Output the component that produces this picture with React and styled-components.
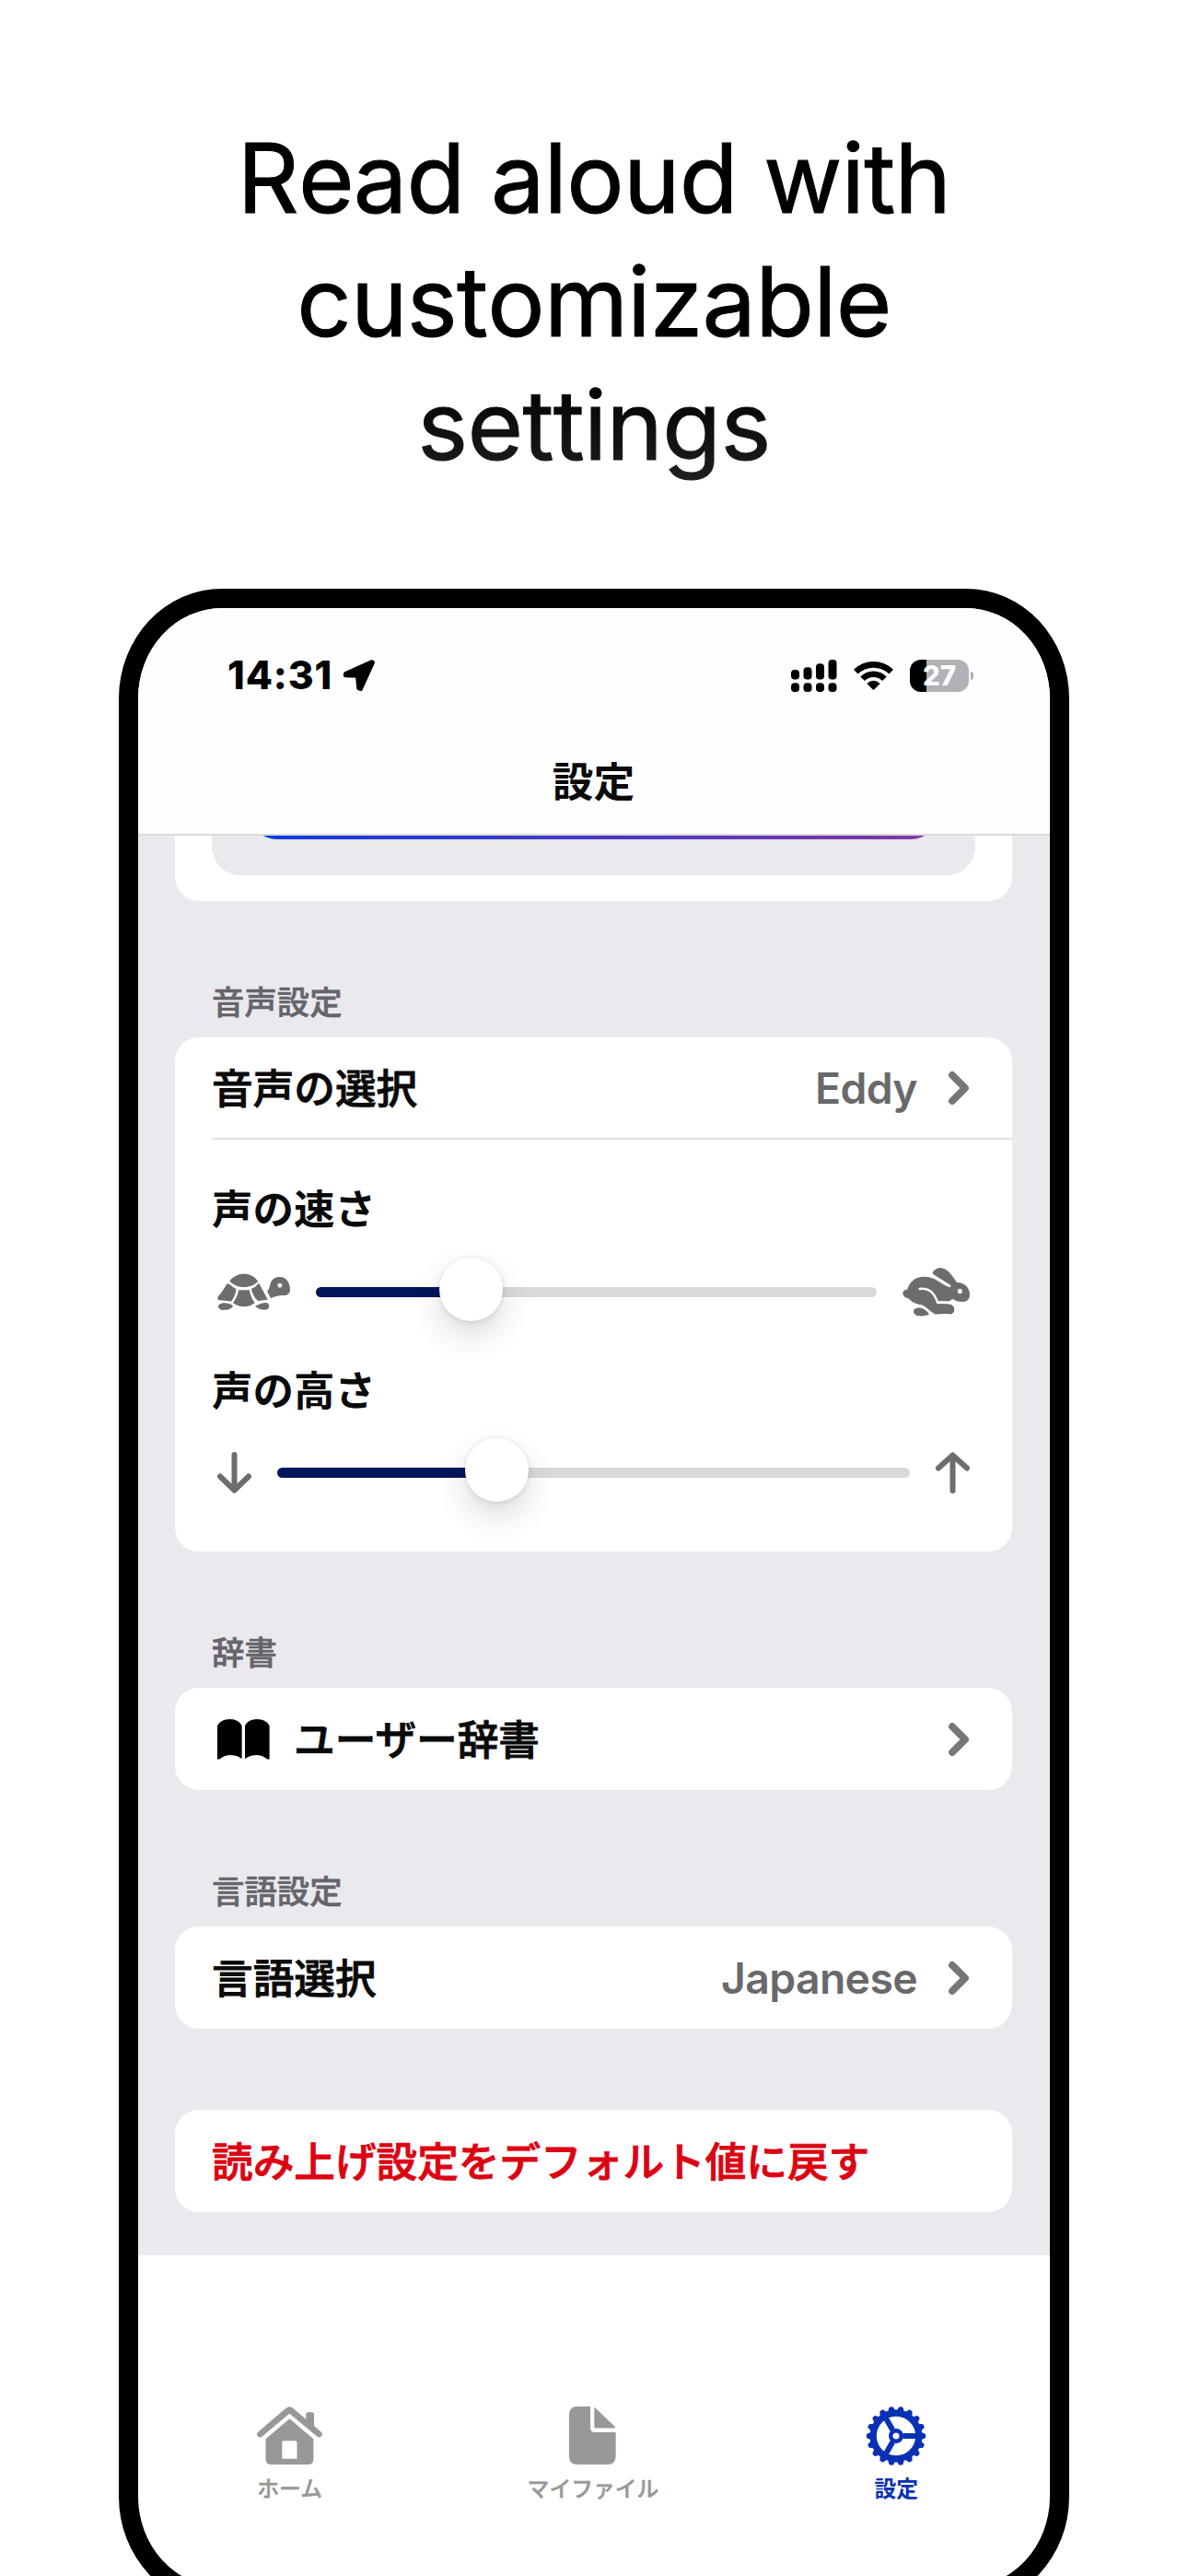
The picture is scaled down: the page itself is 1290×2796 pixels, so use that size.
import React from "react";
import styled, { createGlobalStyle } from "styled-components";

const latin = `Inter, "Noto Sans CJK JP", sans-serif`;
const japanese = `"Noto Sans CJK JP", Inter, sans-serif`;

const GlobalStyle = createGlobalStyle`
  * { box-sizing: border-box; }
  body { margin: 0; background: #fff; }
  svg { display: block; flex: none; overflow: visible; }
`;

const Page = styled.main`
  display: flex;
  flex-direction: column;
  align-items: center;
  width: 1290px;
  height: 2796px;
  overflow: hidden;
  background: #fff;
  font-family: ${latin};
  font-optical-sizing: none;
`;

const Headline = styled.h1`
  flex: none;
  width: 900px;
  height: 402px;
  margin: 126px 0 111px;
  font-size: 104px;
  font-weight: 400;
  font-kerning: none;
  line-height: 134px;
  letter-spacing: -0.7px;
  text-align: center;
  color: transparent;
  -webkit-text-stroke: 1px transparent;
  background: linear-gradient(#000 70%, #1e1e1e 98%);
  background-clip: text;
`;

const Phone = styled.section`
  flex: none;
  display: flex;
  flex-direction: column;
  width: 1032px;
  height: 2190px;
  border: 21px solid #000;
  border-radius: 112px / 119px;
  overflow: hidden;
  background: #fff;
`;

const Header = styled.header`
  flex: none;
  display: flex;
  flex-direction: column;
  height: 247px;
  background: #fefefe;
  border-bottom: 2px solid #dad9dc;
`;

const StatusBar = styled.div`
  display: flex;
  align-items: center;
  justify-content: space-between;
  height: 146px;
  padding: 0 83px 0 97px;
`;

const StatusGroup = styled.div`
  display: flex;
  align-items: center;
  gap: ${(p) => p.$gap}px;
`;

const Clock = styled.time`
  width: 112px;
  font-size: 42.5px;
  font-weight: 800;
  line-height: 50px;
  letter-spacing: 0.9px;
  white-space: nowrap;
`;

const BatteryShell = styled.div`
  display: flex;
  align-items: center;
  gap: 2px;
`;

const BatteryBody = styled.div`
  display: flex;
  align-items: center;
  justify-content: center;
  width: 64px;
  height: 35px;
  border-radius: 12px;
  background: linear-gradient(90deg, #000 18px, #b2b1b8 18px);
  color: #fff;
  font-size: 29.5px;
  font-weight: 800;
  line-height: 35px;
`;

const BatteryNub = styled.div`
  width: 3px;
  height: 9px;
  border-radius: 0 3px 3px 0;
  background: #b2b1b8;
`;

const NavTitle = styled.h2`
  margin: 7px 0 0;
  height: 66px;
  font: 700 44.7px/66px ${japanese};
  text-align: center;
  text-indent: -1px;
  color: #0a0a0a;
`;

const Content = styled.div`
  flex: none;
  display: flex;
  flex-direction: column;
  height: 1541px;
  padding: 0 41px 0 40px;
  background: #eae9ee;
`;

const PreviewCard = styled.div`
  flex: none;
  height: 71px;
  padding: 0 40px 28px;
  border-radius: 0 0 26px 26px;
  background: #fff;
`;

const PreviewPanel = styled.div`
  display: flex;
  justify-content: center;
  align-items: flex-start;
  height: 43px;
  overflow: hidden;
  border-radius: 0 0 31px 31px;
  background: #eae9ee;
`;

const PreviewButton = styled.div`
  width: 748px;
  height: 120px;
  margin-top: -116px;
  border-radius: 30px;
  background: linear-gradient(90deg, #0f3ade 4%, #8038a6 96%);
`;

const SectionTitle = styled.h3`
  flex: none;
  height: 52px;
  margin: 82px 0 14px 40px;
  font: 500 35.4px/52px ${japanese};
  -webkit-text-stroke: 0.6px currentColor;
  color: #66656b;
`;

const Card = styled.div`
  flex: none;
  display: flex;
  flex-direction: column;
  height: ${(p) => p.$height}px;
  margin-top: ${(p) => p.$top || 0}px;
  padding-left: 40px;
  border-radius: 26px;
  background: #fff;
`;

const Row = styled.div`
  display: flex;
  align-items: center;
  height: 111px;
  padding: 0 47px 0 0;
  border-bottom: ${(p) => (p.$divided ? "2px solid #e2e1e4" : "none")};
`;

const RowLabel = styled.span`
  flex: 1;
  height: 66px;
  margin-bottom: 4px;
  font: 500 44.65px/66px ${japanese};
  -webkit-text-stroke: 0.9px currentColor;
  color: ${(p) => (p.$danger ? "#dc0413" : "#0a0a0a")};
  white-space: nowrap;
`;

const RowIcon = styled.span`
  margin: 0 26px 0 6px;
`;

const RowValue = styled.span`
  margin-right: 34px;
  font-size: 46.3px;
  font-weight: 600;
  line-height: 60px;
  letter-spacing: -0.6px;
  color: #69696b;
`;

const SliderBlock = styled.div`
  display: flex;
  flex-direction: column;
  height: 196.5px;
  padding: 40px 46px 0 0;
`;

const SliderLabel = styled.span`
  height: 66px;
  font: 700 44.5px/66px ${japanese};
  color: #0a0a0a;
`;

const SliderLine = styled.div`
  display: flex;
  align-items: center;
  height: 70px;
  margin-top: 27.5px;
  padding-left: 6px;
`;

const Track = styled.div`
  position: relative;
  flex: 1;
  height: 11px;
  margin: 0 28px;
  border-radius: 6px;
  background: linear-gradient(90deg, #00155a ${(p) => p.$at}px, #d9d9db ${(p) => p.$at}px);
`;

const Thumb = styled.div`
  position: absolute;
  left: ${(p) => p.$at - 34.5}px;
  top: -32px;
  width: 69px;
  height: 69px;
  border-radius: 50%;
  background: #fff;
  box-shadow: 0 16px 34px rgba(0, 0, 0, 0.14), 0 1px 6px rgba(0, 0, 0, 0.12);
`;

const TabBar = styled.nav`
  display: grid;
  grid-template-columns: repeat(3, 1fr);
  width: 988px;
  padding-top: 164px;
`;

const Tab = styled.div`
  display: flex;
  flex-direction: column;
  align-items: center;
  color: ${(p) => (p.$active ? "#0a31b4" : "#989898")};
`;

const TabLabel = styled.span`
  margin-top: 6px;
  font: ${(p) => (p.$active ? 700 : 500)} 23.8px/36px ${japanese};
  -webkit-text-stroke: ${(p) => (p.$active ? 0 : 0.5)}px currentColor;
  white-space: nowrap;
`;

const LocationArrow = () => (
  <svg width="36" height="36" viewBox="0 0 36 36">
    <path
      d="M32 3.2 L3 16.2 L2.8 18.2 L16 18.8 L17.3 32.2 L19.8 33 L33 4 Z"
      stroke="#000"
      strokeWidth="4"
      strokeLinejoin="round"
    />
  </svg>
);

const Signal = () => (
  <svg width="50" height="35" viewBox="0 0 50 35">
    {[11, 8.3, 4.3, 0].map((top, i) => (
      <g key={top}>
        <rect x={i * 13.5} y={top} width="9" height={21.5 - top} rx="3.8" />
        <rect x={i * 13.5} y="25.3" width="9" height="9.7" rx="3.8" />
      </g>
    ))}
  </svg>
);

const Wifi = () => (
  <svg width="43" height="32" viewBox="0 0 43 32">
    <g fill="none" stroke="#000" strokeWidth="6.6">
      <path d="M2.3 12.2 A27.5 27.5 0 0 1 40.7 12.2" />
      <path d="M9.6 19.8 A16.6 16.6 0 0 1 33.4 19.8" />
    </g>
    <path d="M14.3 25 Q21.5 18.6 28.7 25 L22.4 31.3 Q21.5 32 20.6 31.3 Z" />
  </svg>
);

const Chevron = () => (
  <svg width="22" height="36" viewBox="0 0 22 36">
    <path d="M4 4 L18 18 L4 32" fill="none" stroke="#77767b" strokeWidth="7.8" strokeLinecap="round" strokeLinejoin="round" />
  </svg>
);

const Turtle = () => (
  <svg width="79" height="40" viewBox="167 65 238 120" fill="#6d6d6f">
    <path d="M207 90 C222 72 240 66 254 66 C270 66 290 74 300 92 C285 106 270 110 254 110 C238 110 220 104 207 90Z" />
    <path d="M198 100 Q203 97 208 102 Q218 111 229 116 C227 132 221 148 212 157 L170 152 C166 147 168 142 172 138 C182 128 190 112 198 100Z" />
    <path d="M236 120 H272 C275 138 281 151 290 161 C278 171 266 174 254 174 C240 174 228 169 218 161 C228 149 234 136 236 120Z" />
    <path d="M278 116 Q292 111 301 99 L304 99 L332 151 L300 155 C288 145 281 130 278 116Z" />
    <path d="M170 173 C172 161 200 157 218 171 C214 182 200 185 187 185 C176 185 170 180 170 173Z" />
    <path d="M290 172 C304 165 318 160 329 161 C340 166 338 183 326 184 C310 186 298 180 290 172Z" />
    <path
      fillRule="evenodd"
      d="M330 124 C336 118 338 110 340 100 C345 85 355 77 371 77 C392 77 405 95 405 118 C405 132 395 138 380 137 C365 138 355 140 342 147Z M379 105 A7.5 7.5 0 1 0 364 105 A7.5 7.5 0 1 0 379 105Z"
    />
  </svg>
);

const Rabbit = () => (
  <svg width="73" height="53" viewBox="601 677 219 145" preserveAspectRatio="none" fill="#6d6d6f">
    <path d="M602 752 C602 745 609 742 617 741 C626 716 646 704 672 704 C698 704 716 716 735 727 Q748 735 757 735 L758 731 Q735 719 701 697 C695 688 708 678 728 678 C750 681 762 700 778 721 C802 720 820 736 820 757 C820 772 809 779 795 778 C783 778 773 775 764 769 C757 776 750 777 740 777 L718 776 L716 785 C735 783 748 784 756 786 C775 790 774 814 756 815 C740 813 725 815 708 815 C692 808 680 794 664 787 C645 786 630 778 620 768 C608 766 602 760 602 752Z" />
    <path d="M637 806 C637 798 645 795 660 796 C672 799 682 806 688 815 C676 820 664 821 655 820 C643 819 637 813 637 806Z" />
    <g fill="none" stroke="#fff" strokeLinecap="round">
      <path d="M657 740 C690 735 706 755 715 780 Q728 780 745 781" strokeWidth="7" />
      <path d="M699 699 L755 731" strokeWidth="6" />
    </g>
    <circle cx="788" cy="747" r="7.5" fill="#fff" />
  </svg>
);

const Arrow = ({ up }) => (
  <svg width="37" height="45" viewBox="0 0 37 45">
    <path
      d={up ? "M18.5 42 V3.5 M3 17.5 L18.5 3.5 L34 17.5" : "M18.5 3 V41.5 M3 26.5 L18.5 41.5 L34 26.5"}
      fill="none"
      stroke="#6d6d6f"
      strokeWidth="6"
      strokeLinecap="round"
      strokeLinejoin="round"
    />
  </svg>
);

const Book = () => (
  <svg width="57" height="44" viewBox="0 0 57 44">
    <path d="M0 42.5 V7 Q3.8 0 13.5 0 Q23 0 26.6 7 V43 Q21 39 14 39 Q8 39 3 43 Q0 44.5 0 42.5Z" />
    <path d="M56.6 42.5 V7 Q52.8 0 43.1 0 Q33.6 0 30 7 V43 Q35.6 39 42.6 39 Q48.6 39 53.6 43 Q56.6 44.5 56.6 42.5Z" />
  </svg>
);

const Home = () => (
  <svg width="71" height="64" viewBox="0 0 71 64" fill="currentColor">
    <path d="M3.6 30 L33.5 4.6 Q35.3 3 37.1 4.6 L67.4 30" fill="none" stroke="currentColor" strokeWidth="6.8" strokeLinecap="round" />
    <path d="M53.3 22 V8.5 Q53.3 6.3 55.5 6.3 H60 Q62 6.3 62 8.5 V26Z" />
    <path fillRule="evenodd" d="M35.4 13.2 L61.4 35.3 V57 Q61.4 63 55.4 63 H15.5 Q9.5 63 9.5 57 V35.3Z M29 37.3 Q27.3 37.3 27.3 39 V56.7 H43.5 V39 Q43.5 37.3 41.8 37.3Z" />
  </svg>
);

const FileIcon = () => (
  <svg width="51" height="64" viewBox="0 0 51 64" fill="currentColor">
    <path d="M9 0 H23 V23 Q23 28 28 28 H50.6 V54 Q50.6 63 41.6 63 H9 Q0 63 0 54 V9 Q0 0 9 0Z" />
    <path d="M27.3 0.5 L49.6 21.8 Q51 23.5 48.6 23.5 H28.5 Q27.3 23.5 27.3 22.3Z" />
  </svg>
);

const Gear = () => (
  <svg width="66" height="64" viewBox="-33 -32 66 64">
    <g fill="none" stroke="currentColor">
      <circle r="24.8" strokeWidth="7.2" />
      <circle r="5.8" strokeWidth="4.4" />
      {[0, 120, 240].map((a) => (
        <path key={a} d="M7.5 0 H23" strokeWidth="6" transform={`rotate(${a})`} />
      ))}
      {Array.from({ length: 18 }, (_, i) => (
        <path key={i} d="M27 -3.4 L31.3 -1.4 V1.4 L27 3.4Z" fill="currentColor" strokeWidth="1.6" strokeLinejoin="round" transform={`rotate(${i * 20})`} />
      ))}
    </g>
  </svg>
);

function Slider({ label, before, after, at }) {
  return (
    <SliderBlock>
      <SliderLabel>{label}</SliderLabel>
      <SliderLine>
        {before}
        <Track $at={at}>
          <Thumb $at={at} />
        </Track>
        {after}
      </SliderLine>
    </SliderBlock>
  );
}

export default function App() {
  return (
    <Page>
      <GlobalStyle />
      <Headline>
        Read aloud with
        <br />
        customizable
        <br />
        settings
      </Headline>
      <Phone>
        <Header>
          <StatusBar>
            <StatusGroup $gap={13}>
              <Clock>14:31</Clock>
              <LocationArrow />
            </StatusGroup>
            <StatusGroup $gap={18}>
              <Signal />
              <Wifi />
              <BatteryShell>
                <BatteryBody>27</BatteryBody>
                <BatteryNub />
              </BatteryShell>
            </StatusGroup>
          </StatusBar>
          <NavTitle>設定</NavTitle>
        </Header>
        <Content>
          <PreviewCard>
            <PreviewPanel>
              <PreviewButton />
            </PreviewPanel>
          </PreviewCard>

          <SectionTitle>音声設定</SectionTitle>
          <Card $height={558}>
            <Row $divided>
              <RowLabel>音声の選択</RowLabel>
              <RowValue>Eddy</RowValue>
              <Chevron />
            </Row>
            <Slider label="声の速さ" before={<Turtle />} after={<Rabbit />} at={168} />
            <Slider label="声の高さ" before={<Arrow />} after={<Arrow up />} at={238.5} />
          </Card>

          <SectionTitle>辞書</SectionTitle>
          <Card $height={111}>
            <Row>
              <RowIcon>
                <Book />
              </RowIcon>
              <RowLabel>ユーザー辞書</RowLabel>
              <Chevron />
            </Row>
          </Card>

          <SectionTitle>言語設定</SectionTitle>
          <Card $height={111}>
            <Row>
              <RowLabel>言語選択</RowLabel>
              <RowValue>Japanese</RowValue>
              <Chevron />
            </Row>
          </Card>

          <Card $height={111} $top={88}>
            <Row>
              <RowLabel $danger>読み上げ設定をデフォルト値に戻す</RowLabel>
            </Row>
          </Card>
        </Content>
        <TabBar>
          <Tab>
            <Home />
            <TabLabel>ホーム</TabLabel>
          </Tab>
          <Tab>
            <FileIcon />
            <TabLabel>マイファイル</TabLabel>
          </Tab>
          <Tab $active>
            <Gear />
            <TabLabel $active>設定</TabLabel>
          </Tab>
        </TabBar>
      </Phone>
    </Page>
  );
}
